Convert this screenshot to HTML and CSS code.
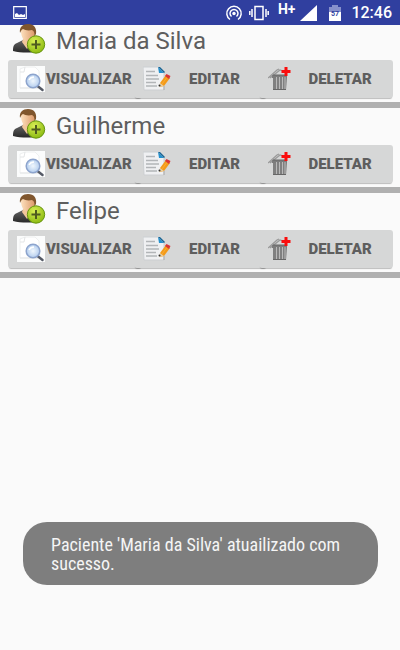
FILE: index.html
```html
<!DOCTYPE html>
<html lang="pt-BR">
<head>
<meta charset="utf-8">
<meta name="viewport" content="width=device-width, initial-scale=1">
<title>Pacientes</title>
<link rel="stylesheet" href="styles.css">
</head>
<body>
<svg class="defs" aria-hidden="true">
  <defs>
    <linearGradient id="skin" x1="0" x2="1"><stop offset="0" stop-color="#fde0bd"/><stop offset="1" stop-color="#dc9868"/></linearGradient>
    <linearGradient id="suit" x1="0" y1="0" x2="0" y2="1"><stop offset="0" stop-color="#646464"/><stop offset="1" stop-color="#292929"/></linearGradient>
    <radialGradient id="lime" cx=".4" cy=".3" r=".7"><stop offset="0" stop-color="#d8ee55"/><stop offset="1" stop-color="#8dbb12"/></radialGradient>
    <radialGradient id="lens"><stop offset="0" stop-color="#f0f7fd"/><stop offset="1" stop-color="#b3cdee"/></radialGradient>
    <symbol id="person" viewBox="0 0 34 30">
      <path d="M1 27c0-5 1-7 4-8l6-3h8l6 3c3 1 4 4 4 8-8 2-20 2-28 0z" fill="url(#suit)"/>
      <path d="M11 15h8l1 3-5 7-5-7z" fill="#f2c69b"/>
      <path d="M9 7c0-4 2-6 7-6s7 3 7 7c0 5-3 10-7 10s-7-5-7-11z" fill="url(#skin)"/>
      <path d="M8 9C7 3 11 0 16 0c6 0 9 4 8 10l-2 3c1-4 0-6-2-7-4 1-7 0-9-1-2 1-2 2-3 4z" fill="#80562d"/>
      <circle cx="24" cy="20.500" r="8.700" fill="url(#lime)" stroke="#679510"/>
      <path d="M24 16v9M19.500 20.500h9" stroke="#4e5b1f" stroke-width="2"/>
    </symbol>
    <symbol id="view" viewBox="0 0 28 26">
      <path d="M0 0h28v26H0z" fill="#fbfcfc"/>
      <path d="M3 22V3l5-2h10l4 4v17z" fill="#fff" stroke="#eef0f0"/>
      <path d="M3 6h4l1-5M3 22h18" fill="none" stroke="#e3e5e6"/>
      <path d="M20.500 20l5 4" stroke="#555a66" stroke-width="2.500" stroke-linecap="round"/>
      <circle cx="16" cy="15" r="6.800" fill="url(#lens)" stroke="#8da4cd" stroke-width="1.500"/>
      <path d="M12 14c1-2 3-3 5-3" fill="none" stroke="#fff" stroke-width="1.500"/>
    </symbol>
    <symbol id="edit" viewBox="0 0 28 26">
      <path d="M0 1h16l5 5v18H1z" fill="#eff0f2" stroke="#cccfd2"/>
      <path d="M15 1l6 6h-5z" fill="#2491ce"/><path d="M15 1h2l5 5-1 1z" fill="#176291"/>
      <path d="M3 5.500h9M3 9.500h12M3 13h13M3 16.500h10M3 20h11" stroke="#b2b5b8" stroke-width="1.300"/>
      <path d="M17 17l6-8 4 3-6 8-4 1z" fill="#f49a18"/>
      <path d="M19 18l6-8" stroke="#f9ad35"/>
      <path d="M22 10l1.500-2 4 2-1.500 3z" fill="#d93534"/>
      <path d="M17 17l4 3-5 1z" fill="#ead0a2"/><circle cx="16.500" cy="19.500" r="1" fill="#333"/>
      <path d="M21 20v4" stroke="#aaa"/>
    </symbol>
    <symbol id="trash" viewBox="0 0 28 26">
      <path d="M0 12L9 4l2-1M2 12l10-8 3 1" fill="none" stroke="#999" stroke-width="1.300"/>
      <path d="M4 9h15v3H4z" fill="#7c7c7c"/><path d="M5 12h14l-1 12H5z" fill="#808080"/>
      <path d="M8.500 11v12M11.500 11v12M14.500 11v12M17 11v12" stroke="#b9b9b9"/>
      <path d="M5 9h14M5 23.500h13" stroke="#666"/>
      <path d="M18 1v9M13.500 5.500h9" stroke="#fa0d0d" stroke-width="3"/>
    </symbol>
  </defs>
</svg>

<header class="status">
  <svg class="status-photo" width="14" height="13" viewBox="0 0 14 13" aria-hidden="true"><path d="M.7.700h12.600v11.600H.7z" fill="none" stroke="#fff" stroke-width="1.200"/><path d="M2 11V8l2-1 2 2 2-1 2 1 2-1v3z" fill="#fff"/></svg>
  <svg width="18" height="16" viewBox="0 0 18 16" aria-hidden="true"><g fill="none" stroke="#fff" stroke-width="1.500"><path d="M5 14.500a7.200 7.200 0 1 1 8 0M6.500 11.500a4 4 0 1 1 5 0"/></g><circle cx="9" cy="8.500" r="1.700" fill="#fff"/></svg>
  <svg class="status-vibrate" width="20" height="16" viewBox="0 0 20 16" aria-hidden="true"><path d="M6 1.500h8v13H6zM3 4v8M.8 6v4M17 4v8M19.200 6v4" fill="none" stroke="#fff" stroke-width="1.500"/></svg>
  <span class="status-network">H+</span>
  <svg class="status-signal" width="17" height="16" viewBox="0 0 17 16" aria-hidden="true"><path d="M17 0v16H0z" fill="#fff"/></svg>
  <svg class="status-battery" width="12" height="16" viewBox="0 0 12 16" role="img" aria-label="57%"><path d="M0 2h3V0h6v2h3v6H0z" fill="#8790cb"/><path d="M0 7h12v9H0z" fill="#fff"/><text class="battery-level" x="6" y="11" text-anchor="middle">57</text></svg>
  <time class="status-time">12:46</time>
</header>

<main>
  <ul class="patients">
    <li class="patient">
      <div class="patient-name"><svg class="avatar" aria-hidden="true"><use href="#person"/></svg><h2>Maria da Silva</h2></div>
      <div class="actions">
        <button type="button"><svg aria-hidden="true"><use href="#view"/></svg><span>VISUALIZAR</span></button>
        <button type="button"><svg aria-hidden="true"><use href="#edit"/></svg><span>EDITAR</span></button>
        <button type="button"><svg aria-hidden="true"><use href="#trash"/></svg><span>DELETAR</span></button>
      </div>
    </li>
    <li class="patient">
      <div class="patient-name"><svg class="avatar" aria-hidden="true"><use href="#person"/></svg><h2>Guilherme</h2></div>
      <div class="actions">
        <button type="button"><svg aria-hidden="true"><use href="#view"/></svg><span>VISUALIZAR</span></button>
        <button type="button"><svg aria-hidden="true"><use href="#edit"/></svg><span>EDITAR</span></button>
        <button type="button"><svg aria-hidden="true"><use href="#trash"/></svg><span>DELETAR</span></button>
      </div>
    </li>
    <li class="patient">
      <div class="patient-name"><svg class="avatar" aria-hidden="true"><use href="#person"/></svg><h2>Felipe</h2></div>
      <div class="actions">
        <button type="button"><svg aria-hidden="true"><use href="#view"/></svg><span>VISUALIZAR</span></button>
        <button type="button"><svg aria-hidden="true"><use href="#edit"/></svg><span>EDITAR</span></button>
        <button type="button"><svg aria-hidden="true"><use href="#trash"/></svg><span>DELETAR</span></button>
      </div>
    </li>
  </ul>
</main>
<div class="toast" role="status">Paciente 'Maria da Silva' atuailizado com sucesso.</div>
</body>
</html>
```
FILE: styles.css
```css
* { box-sizing: border-box; }

body {
  margin: 0;
  min-height: 100vh;
  background: #fafafa;
  color: #5e5e5e;
  font-family: Roboto, "Liberation Sans", sans-serif;
}

.defs {
  position: absolute;
  width: 0;
  height: 0;
}

.status {
  display: flex;
  align-items: center;
  height: 25px;
  padding: 0 8px 0 13px;
  background: #303f9f;
  color: #fff;
}

.status svg { flex: none; }
.status-photo { margin-right: auto; }
.status-vibrate { margin-left: 6px; }

.status-network {
  align-self: flex-start;
  margin-left: 9px;
  font-size: 14px;
  line-height: 18px;
  font-weight: 700;
}

.status-signal { margin-left: 5px; }
.status-battery { margin-left: 12px; }

.battery-level {
  fill: #303f9f;
  font-size: 7px;
  font-weight: 700;
}

.status-time {
  margin-left: 10px;
  font-size: 16px;
  line-height: 24px;
  font-weight: 500;
}

.patients {
  margin: -2px 0 0;
  padding: 0;
  list-style: none;
}

.patient {
  padding-top: 1px;
  border-bottom: 6px solid #b0b0b0;
}

.patient-name {
  display: flex;
  align-items: flex-start;
  gap: 10px;
  height: 36px;
  padding-left: 12px;
}

.avatar {
  width: 34px;
  height: 30px;
}

.patient h2 {
  margin: 0;
  font-size: 24px;
  line-height: 34px;
  font-weight: 400;
}

.actions {
  display: flex;
  padding: 0 7px 4px 8px;
}

.actions button {
  display: flex;
  flex: 1 1 0;
  align-items: center;
  height: 38px;
  padding: 0 9px;
  border: 0;
  border-radius: 3px;
  background: #d6d7d7;
  box-shadow: 0 2px 1px -1px #00000040;
  color: #5e5e5e;
  font: 900 15px/20px Roboto, "Liberation Sans", sans-serif;
}

.actions button + button { margin-left: -8px; }

.actions svg {
  flex: none;
  width: 28px;
  height: 26px;
}

.actions span {
  flex: 1;
  text-align: center;
}

.toast {
  position: fixed;
  right: 22px;
  bottom: 65px;
  left: 23px;
  padding: 13px 28px 12px;
  border-radius: 24px;
  background: #7e7e7e;
  color: #f5f5f5;
  font-family: "Roboto Condensed", Roboto, "Liberation Sans", sans-serif;
  font-size: 18px;
  line-height: 19px;
}
```
